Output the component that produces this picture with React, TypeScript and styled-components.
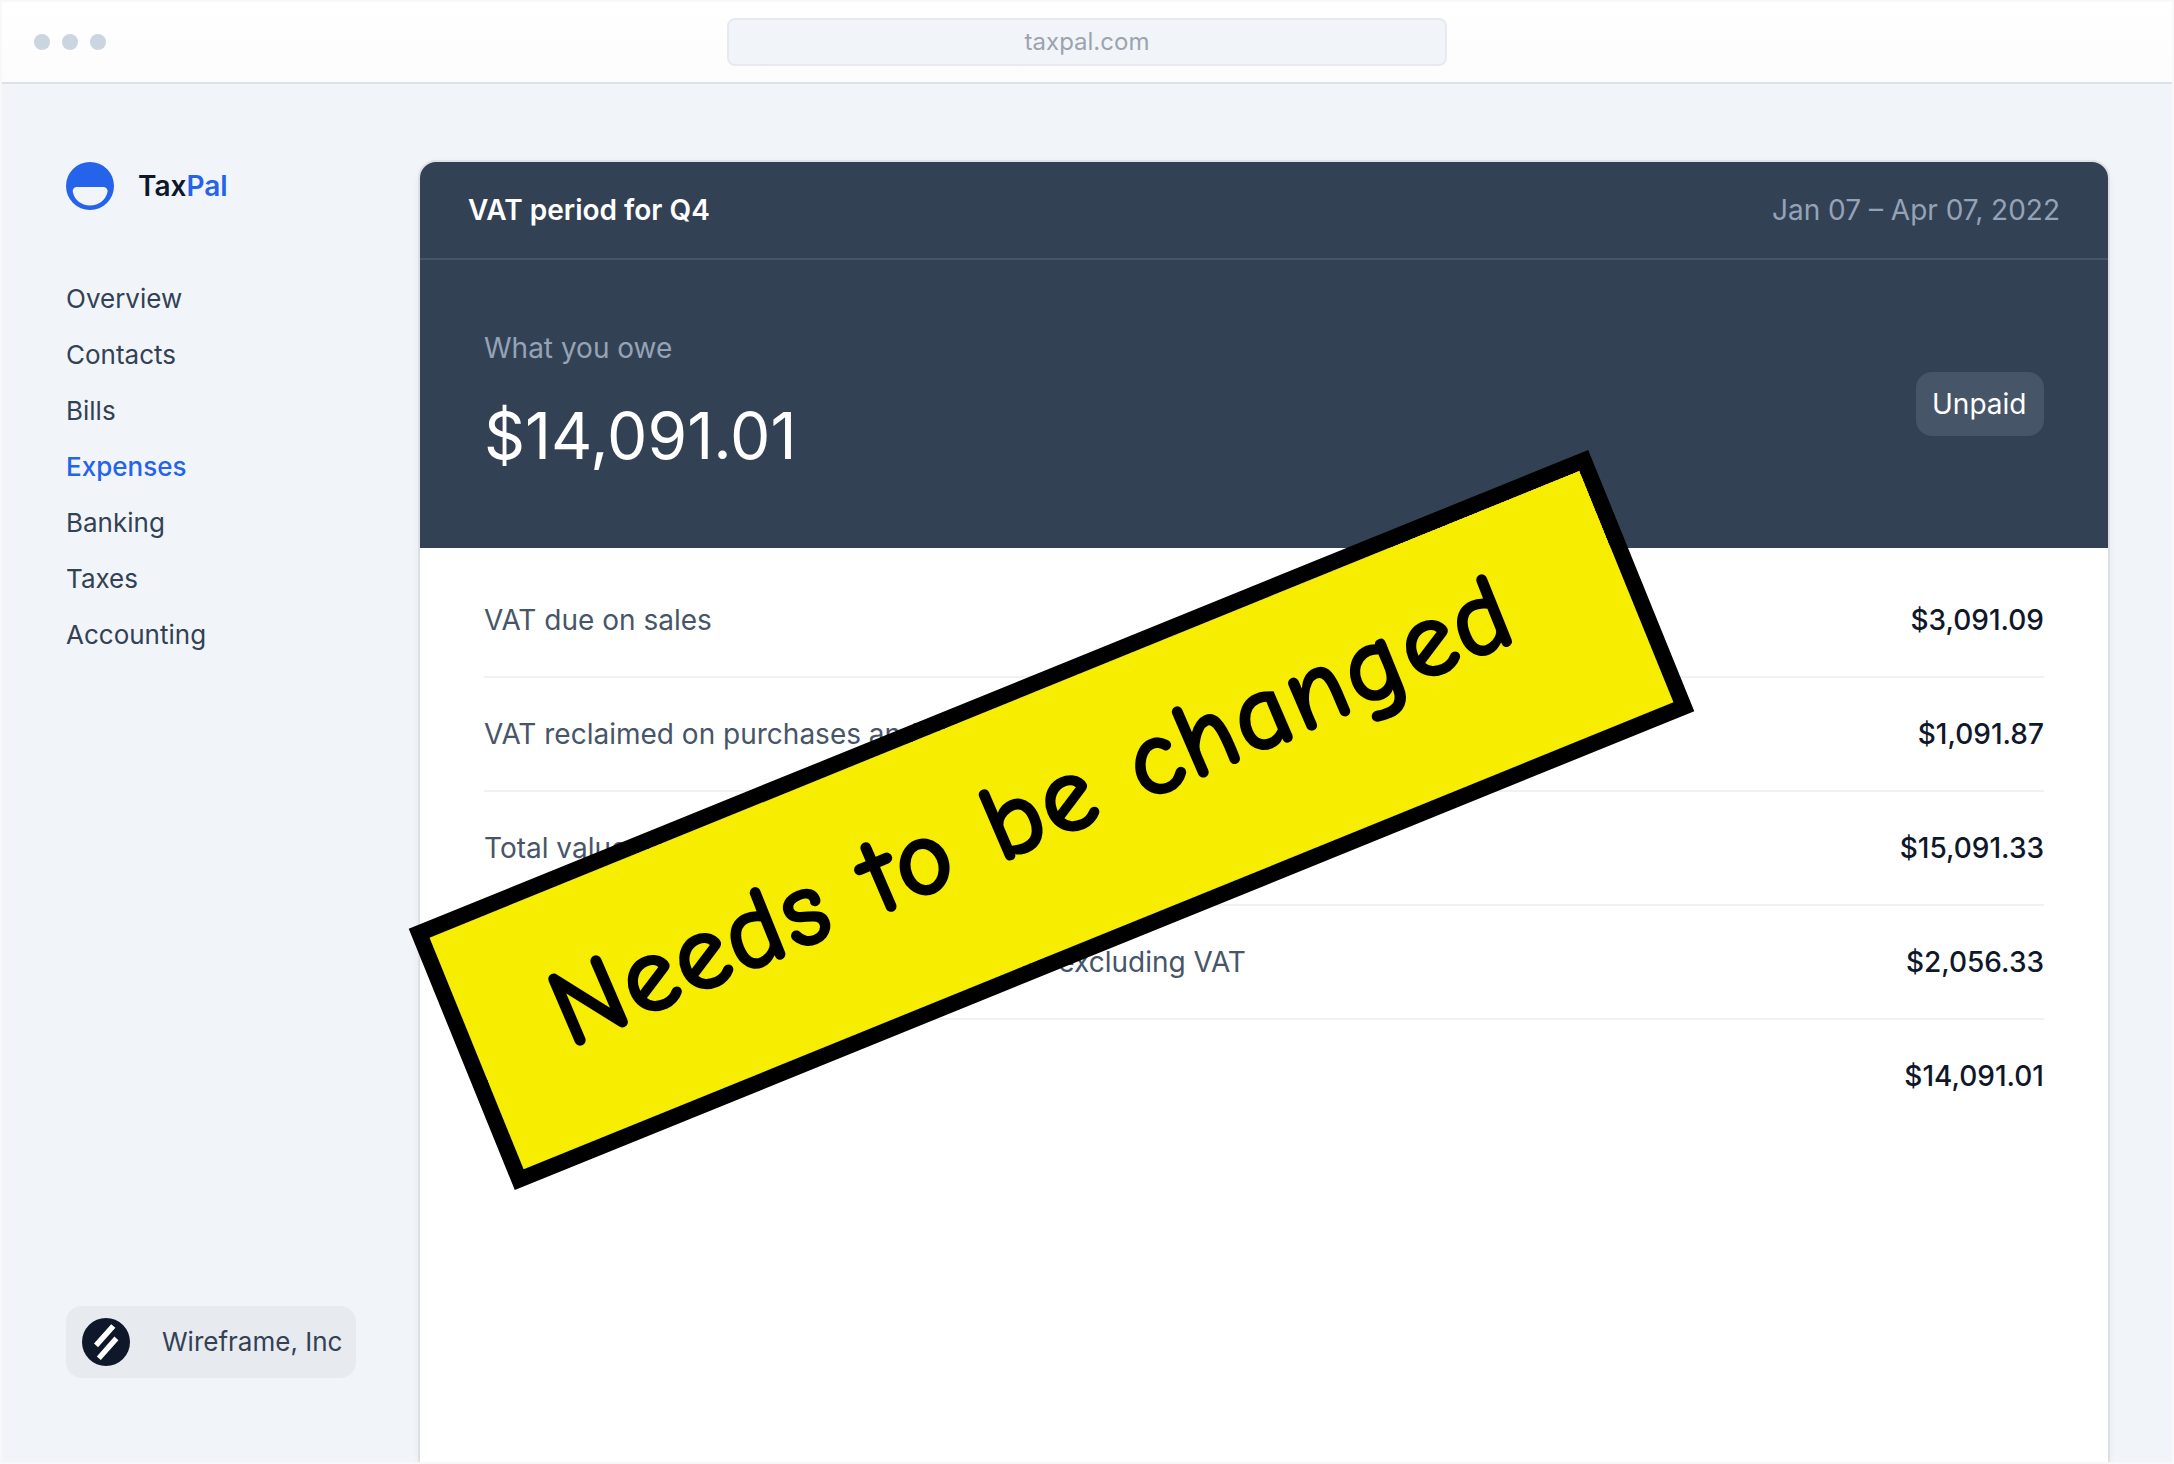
import React from 'react';
import styled, { createGlobalStyle } from 'styled-components';

const color = {
  ink: '#0f172a',
  slate: '#334155',
  text: '#475569',
  muted: '#94a3b8',
  blue: '#2563eb',
  page: '#f1f5f9',
  dot: '#cbd5e1',
};

const GlobalStyle = createGlobalStyle`
  *, *::before, *::after { box-sizing: border-box; }
  body {
    margin: 0;
    font-family: Inter, 'Liberation Sans', sans-serif;
    color: ${color.slate};
    background: ${color.page};
    -webkit-font-smoothing: antialiased;
  }
`;

const Frame = styled.div`
  position: relative;
  display: flex;
  flex-direction: column;
  min-height: 100vh;
  border: 2px solid #f8f8f8;
  background: ${color.page};
  overflow: hidden;
`;

const BrowserBar = styled.header`
  display: grid;
  grid-template-columns: 1fr minmax(0, 720px) 1fr;
  align-items: center;
  height: 80px;
  padding: 0 32px;
  background: linear-gradient(#fff, #fcfcfc);
  box-shadow: 0 2px 0 #dce1e8;
`;

const Dots = styled.div`
  display: flex;
  gap: 12px;
`;

const Dot = styled.span`
  width: 16px;
  height: 16px;
  border-radius: 50%;
  background: ${color.dot};
`;

const Address = styled.input`
  width: 100%;
  height: 48px;
  padding: 0 0 2px;
  border: 2px solid #e6eaf0;
  border-radius: 8px;
  background: ${color.page};
  color: #9ca3af;
  font: 400 24px/32px Inter, 'Liberation Sans', sans-serif;
  text-align: center;
`;

const Body = styled.div`
  flex: 1;
  display: flex;
  gap: 64px;
  padding: 80px 64px 0;
`;

const Sidebar = styled.aside`
  flex: none;
  display: flex;
  flex-direction: column;
  width: 290px;
  padding-bottom: 84px;
`;

const Brand = styled.a`
  display: flex;
  align-items: center;
  gap: 24px;
  height: 48px;
  color: ${color.ink};
  font-size: 28px;
  font-weight: 600;
  text-decoration: none;
`;

const BrandAccent = styled.span`
  color: ${color.blue};
`;

const Nav = styled.nav`
  display: flex;
  flex-direction: column;
  margin-top: 61px;
`;

const NavLink = styled.a<{ $active?: boolean }>`
  color: ${(p) => (p.$active ? color.blue : color.slate)};
  font-size: 26px;
  font-weight: ${(p) => (p.$active ? 500 : 400)};
  line-height: 56px;
  text-decoration: none;
`;

const Account = styled.button`
  display: flex;
  align-items: center;
  gap: 32px;
  height: 72px;
  margin-top: auto;
  padding: 0 0 0 16px;
  border: 0;
  border-radius: 16px;
  background: #e7eaef;
  color: ${color.slate};
  font: 400 26px/40px Inter, 'Liberation Sans', sans-serif;
  white-space: nowrap;
`;

const Mark = styled.svg`
  flex: none;
  width: 48px;
  height: 48px;
`;

const Card = styled.main`
  flex: 1;
  min-width: 0;
  border-radius: 16px 16px 0 0;
  background: #fff;
  box-shadow: 0 0 0 2px rgba(15, 23, 42, 0.06), 0 2px 8px rgba(15, 23, 42, 0.08);
`;

const Summary = styled.section`
  border-radius: 16px 16px 0 0;
  background: ${color.slate};
`;

const SummaryHead = styled.div`
  display: flex;
  align-items: center;
  justify-content: space-between;
  height: 98px;
  padding: 0 48px;
  border-bottom: 2px solid ${color.text};
`;

const Title = styled.h1`
  margin: 0;
  color: #fff;
  font-size: 28px;
  font-weight: 600;
  line-height: 48px;
`;

const Muted = styled.p`
  margin: 0;
  color: ${color.muted};
  font-size: 28px;
  line-height: 48px;
`;

const SummaryBody = styled.div`
  display: flex;
  align-items: center;
  justify-content: space-between;
  padding: 64px;
`;

const Owed = styled.p`
  margin: 16px 0 0;
  color: #fff;
  font-size: 64px;
  line-height: 96px;
`;

const Badge = styled.span`
  min-width: 128px;
  padding: 8px 16px;
  border-radius: 16px;
  background: ${color.text};
  color: #fff;
  font-size: 28px;
  line-height: 48px;
`;

const TableWrap = styled.div`
  padding: 16px 64px;
`;

const Table = styled.table`
  width: 100%;
  border-collapse: collapse;
  font-size: 28px;
  line-height: 48px;
`;

const Row = styled.tr`
  & + & {
    border-top: 2px solid #f0f1f2;
  }
`;

const Label = styled.th`
  padding: 32px 0;
  color: ${color.text};
  font-weight: 400;
  text-align: left;
`;

const Amount = styled.td`
  padding: 32px 0;
  color: ${color.ink};
  font-weight: 500;
  text-align: right;
`;

const Banner = styled.div`
  position: absolute;
  top: 677px;
  left: 413px;
  display: flex;
  align-items: center;
  justify-content: center;
  width: 1273px;
  height: 282px;
  padding: 0 32px 32px 0;
  border: 16px solid #000;
  background: #f6ed00;
  background-clip: padding-box;
  transform: rotate(-22.1deg);
`;

const BannerText = styled.strong`
  color: #000;
  font-family: 'Comic Sans MS', 'Comic Neue', Inter, sans-serif;
  font-size: 114px;
  font-weight: 700;
  line-height: 120px;
  white-space: nowrap;
  transform: rotate(-1.2deg);
`;

const LogoMark = () => (
  <Mark viewBox="0 0 48 48" aria-hidden="true">
    <circle cx="24" cy="24" r="24" fill={color.blue} />
    <path
      d="M11 25H37.200C40 25 42 27.200 41.500 30C39.800 38 32.800 43.400 24 43.400S8.400 38 6.800 30C6.400 27.200 8.200 25 11 25Z"
      fill={color.page}
    />
  </Mark>
);

const AccountMark = () => (
  <Mark viewBox="0 0 48 48" aria-hidden="true">
    <circle cx="24" cy="24" r="24" fill={color.ink} />
    <path
      d="M29.200 6.200L33.400 9.800L16 29.200L12 25.500ZM32.400 18.600L36.400 22.200L18.800 42L14.800 38.400Z"
      fill="#fff"
    />
  </Mark>
);

const navItems = ['Overview', 'Contacts', 'Bills', 'Expenses', 'Banking', 'Taxes', 'Accounting'];

const rows = [
  ['VAT due on sales', '$3,091.09'],
  ['VAT reclaimed on purchases and other inputs', '$1,091.87'],
  ['Total value of sales excluding VAT', '$15,091.33'],
  ['Total value of purchases and other outputs excluding VAT', '$2,056.33'],
  ['Net VAT due', '$14,091.01'],
];

export default function App() {
  return (
    <>
      <GlobalStyle />
      <Frame>
        <BrowserBar>
          <Dots>
            <Dot />
            <Dot />
            <Dot />
          </Dots>
          <Address aria-label="Address" defaultValue="taxpal.com" />
        </BrowserBar>
        <Body>
          <Sidebar>
            <Brand href="#">
              <LogoMark />
              <span>
                Tax<BrandAccent>Pal</BrandAccent>
              </span>
            </Brand>
            <Nav>
              {navItems.map((item) => (
                <NavLink key={item} href="#" $active={item === 'Expenses'}>
                  {item}
                </NavLink>
              ))}
            </Nav>
            <Account type="button">
              <AccountMark />
              Wireframe, Inc
            </Account>
          </Sidebar>
          <Card>
            <Summary>
              <SummaryHead>
                <Title>VAT period for Q4</Title>
                <Muted>Jan 07 – Apr 07, 2022</Muted>
              </SummaryHead>
              <SummaryBody>
                <div>
                  <Muted>What you owe</Muted>
                  <Owed>$14,091.01</Owed>
                </div>
                <Badge>Unpaid</Badge>
              </SummaryBody>
            </Summary>
            <TableWrap>
              <Table>
                <tbody>
                  {rows.map(([label, amount]) => (
                    <Row key={label}>
                      <Label scope="row">{label}</Label>
                      <Amount>{amount}</Amount>
                    </Row>
                  ))}
                </tbody>
              </Table>
            </TableWrap>
          </Card>
        </Body>
        <Banner>
          <BannerText>Needs to be changed</BannerText>
        </Banner>
      </Frame>
    </>
  );
}
